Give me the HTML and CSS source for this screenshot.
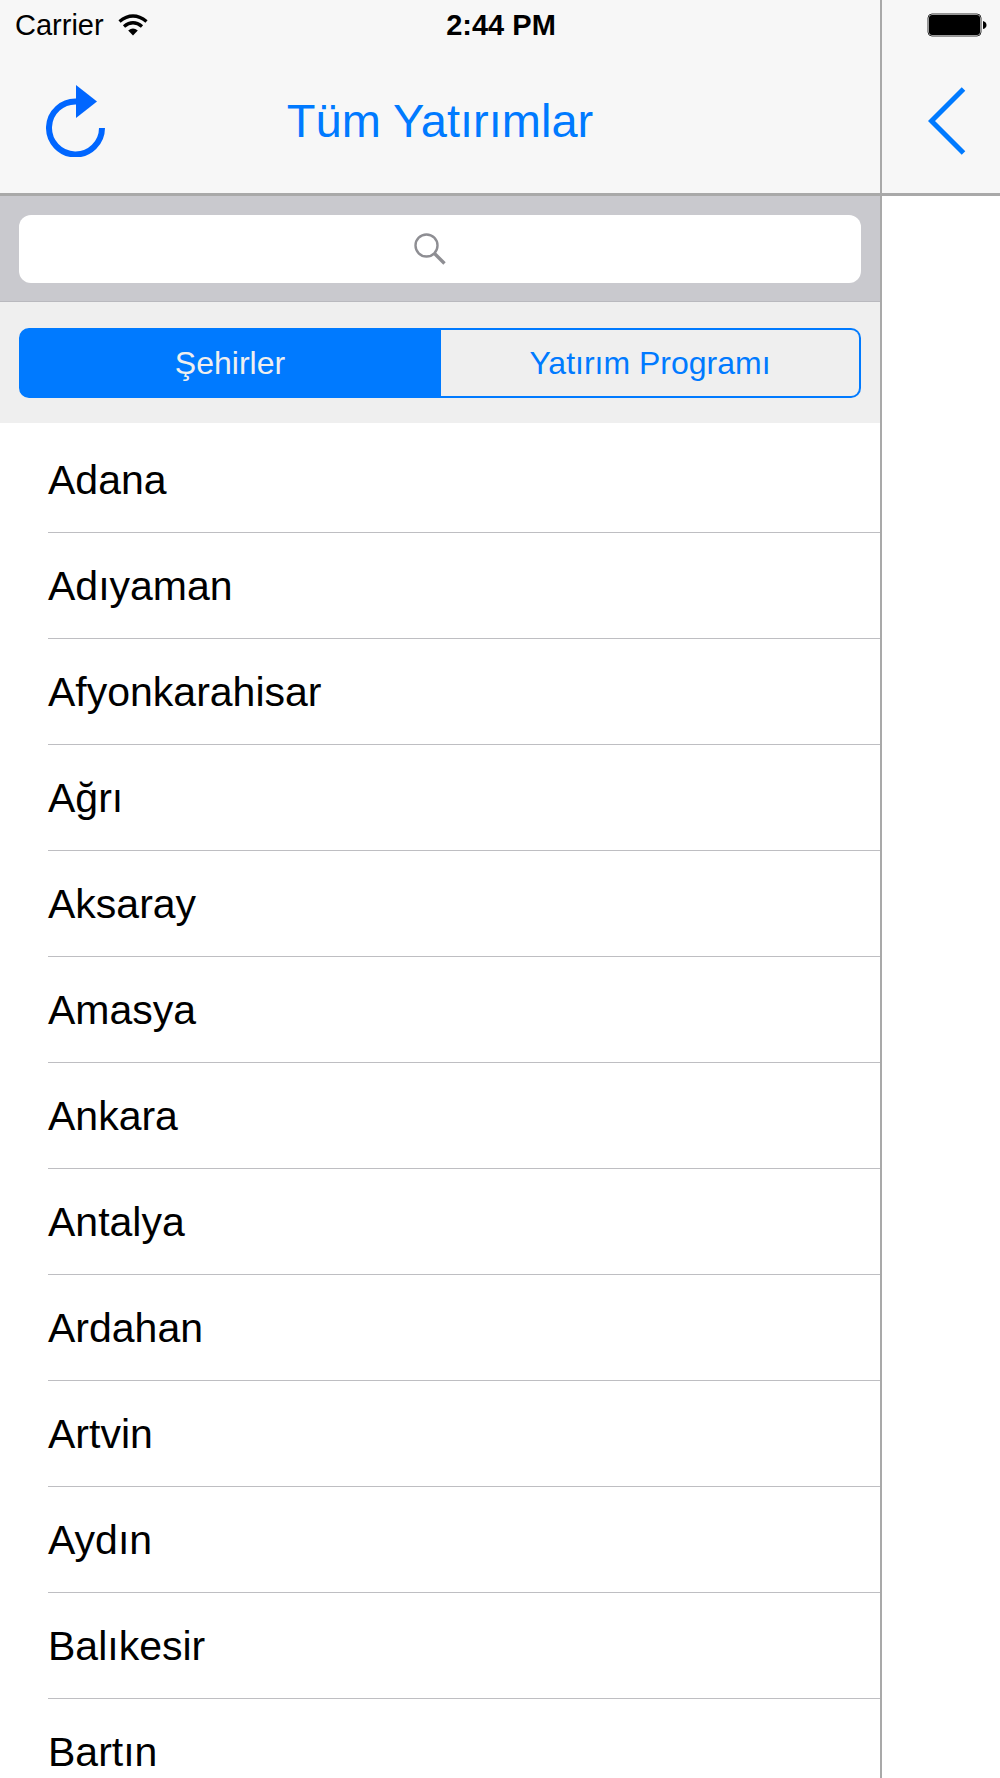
FILE: index.html
```html
<!DOCTYPE html>
<html lang="tr">

<head>
    <meta charset="UTF-8">
    <meta name="viewport" content="width=device-width, initial-scale=1">
    <title>Tüm Yatırımlar</title>
    <link rel="stylesheet" href="styles.css">
</head>

<body>
    <div class="status">
        <div class="carrier">
            <span>Carrier</span>
            <svg width="30" height="22" viewBox="0 0 30 22">
                <path d="M1.500 7.500Q15 -3.500 28.500 7.500" fill="none" stroke="#000" stroke-width="3.400" />
                <path d="M6 12.500Q15 5 24 12.500" fill="none" stroke="#000" stroke-width="3.400" />
                <path d="M10.200 16.600Q15 12.400 19.800 16.600L15 21.500Z" />
            </svg>
        </div>
        <time>2:44 PM</time>
        <svg class="battery" width="60" height="24" viewBox="0 0 60 24">
            <rect x="1" y="1" width="53" height="22" rx="4" fill="#fff" stroke="#333" />
            <rect x="2" y="2" width="51" height="20" rx="3" />
            <path d="M56 8Q59.500 9 59.500 12T56 16Z" />
        </svg>
    </div>

    <div class="app">
        <!-- sol menü -->
        <section class="menu">
            <header class="bar">
                <button class="icon-btn" aria-label="Yenile">
                    <svg width="60" height="72" viewBox="0 0 60 72">
                        <path d="M31 16.500A26.500 26.500 0 1 0 56 43" fill="none" stroke="#0066ff" stroke-width="6" />
                        <path d="M30 0L51 16.500L30 33Z" fill="#0066ff" />
                    </svg>
                </button>
                <h1>Tüm Yatırımlar</h1>
            </header>

            <div class="search">
                <input type="search" aria-label="Ara">
                <svg width="32" height="32" viewBox="0 0 32 32" fill="none" stroke="#8e8e93">
                    <circle cx="12.500" cy="12.500" r="11" stroke-width="2.400" />
                    <path d="M20.500 20.500L30.500 30.500" stroke-width="3.400" />
                </svg>
            </div>

            <div class="segments">
                <button class="current">Şehirler</button>
                <button>Yatırım Programı</button>
            </div>

            <ul class="cities">
                <li><a href="#">Adana</a></li>
                <li><a href="#">Adıyaman</a></li>
                <li><a href="#">Afyonkarahisar</a></li>
                <li><a href="#">Ağrı</a></li>
                <li><a href="#">Aksaray</a></li>
                <li><a href="#">Amasya</a></li>
                <li><a href="#">Ankara</a></li>
                <li><a href="#">Antalya</a></li>
                <li><a href="#">Ardahan</a></li>
                <li><a href="#">Artvin</a></li>
                <li><a href="#">Aydın</a></li>
                <li><a href="#">Balıkesir</a></li>
                <li><a href="#">Bartın</a></li>
            </ul>
        </section>

        <!-- sağdaki sayfa -->
        <section class="detail">
            <header class="bar">
                <button class="icon-btn" aria-label="Geri">
                    <svg width="38" height="68" viewBox="0 0 38 68">
                        <path d="M35.500 2L3.500 34L35.500 66" fill="none" stroke="#007aff" stroke-width="5" />
                    </svg>
                </button>
            </header>
        </section>
    </div>
</body>

</html>
```

FILE: styles.css
```css
* {
    padding: 0;
    margin: 0;
    box-sizing: border-box;
}

body {
    font-family: "Liberation Sans", Arial, sans-serif;
    color: #000;
    background: #fff;
}

button,
input {
    font: inherit;
    border: 0;
    background: none;
}

svg {
    display: block;
}

/* status bar lies over both panes */
.status {
    position: absolute;
    top: 0;
    left: 0;
    right: 0;
    z-index: 1;
    display: grid;
    grid-template-columns: 1fr auto 1fr;
    align-items: center;
    height: 50px;
    padding: 0 13px 0 15px;
    font-size: 29px;
}

.carrier {
    display: flex;
    align-items: center;
    gap: 14px;
}

.status time {
    font-weight: bold;
}

.battery {
    justify-self: end;
}

.app {
    display: flex;
    height: 100vh;
    overflow: hidden;
}

.menu {
    display: flex;
    flex-direction: column;
    flex-shrink: 0;
    width: 88%;
}

.detail {
    flex: 1;
    min-width: 0;
    border-left: 2px solid #a9a9a9;
}

.bar {
    display: flex;
    align-items: center;
    height: 196px;
    padding: 48px 0 0 46px;
    background: #f7f7f7;
    border-bottom: 3px solid #a9a9a9;
}

.bar h1 {
    flex: 1;
    margin-right: 106px;
    text-align: center;
    font-size: 47px;
    font-weight: normal;
    color: #007aff;
}

.icon-btn {
    cursor: pointer;
}

.search {
    position: relative;
    padding: 19px 19px 18px;
    background: #c9c9ce;
    border-bottom: 1px solid #b9b9be;
}

.search input {
    display: block;
    width: 100%;
    height: 68px;
    padding: 0 20px;
    border-radius: 12px;
    background: #fff;
    font-size: 32px;
    -webkit-appearance: none;
    appearance: none;
}

.search svg {
    position: absolute;
    top: 37px;
    left: 50%;
    margin-left: -26px;
}

.segments {
    display: flex;
    padding: 26px 19px 25px;
    background: #efefef;
}

.segments button {
    flex: 1;
    height: 70px;
    border: 2px solid #007aff;
    font-size: 32px;
    color: #007aff;
    cursor: pointer;
}

.segments button:first-child {
    border-radius: 10px 0 0 10px;
}

.segments button:last-child {
    border-left: 0;
    border-radius: 0 10px 10px 0;
}

.segments .current {
    background: #007aff;
    color: #efefef;
}

.cities {
    flex: 1;
    padding: 4px 0 0 48px;
    overflow-y: auto;
    scrollbar-width: none;
    list-style: none;
}

.cities a {
    display: block;
    height: 106px;
    border-bottom: 1px solid #bebec2;
    line-height: 106px;
    font-size: 41px;
    color: #000;
    text-decoration: none;
}
```
